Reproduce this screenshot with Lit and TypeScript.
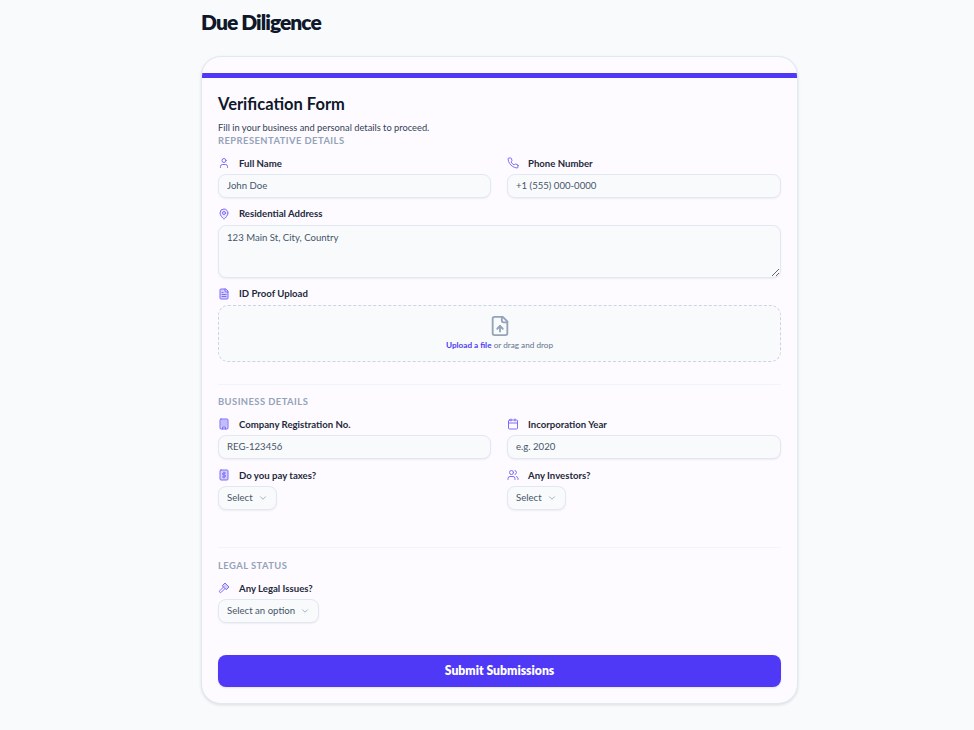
import { LitElement, css, html, svg } from 'lit'
import { customElement } from 'lit/decorators.js'

const icon = (body: unknown, size = 12) => html`<svg xmlns="http://www.w3.org/2000/svg" width=${size} height=${size} viewBox="0 0 24 24" fill="none" stroke="currentColor" stroke-width="2" stroke-linecap="round" stroke-linejoin="round">${body}</svg>`

const icons = {
  user: svg`<path d="M19 21v-2a4 4 0 0 0-4-4H9a4 4 0 0 0-4 4v2"/><circle cx="12" cy="7" r="4"/>`,
  phone: svg`<path d="M22 16.92v3a2 2 0 0 1-2.18 2 19.8 19.8 0 0 1-8.63-3.07 19.5 19.5 0 0 1-6-6 19.8 19.8 0 0 1-3.07-8.67A2 2 0 0 1 4.11 2h3a2 2 0 0 1 2 1.72c.13.96.36 1.9.7 2.81a2 2 0 0 1-.45 2.11L8.09 9.91a16 16 0 0 0 6 6l1.27-1.27a2 2 0 0 1 2.11-.45c.91.34 1.85.57 2.81.7A2 2 0 0 1 22 16.92z"/>`,
  pin: svg`<path d="M20 10c0 5-5.5 10.2-7.4 11.8a1 1 0 0 1-1.2 0C9.5 20.2 4 15 4 10a8 8 0 0 1 16 0" fill="currentColor" fill-opacity=".12"/><circle cx="12" cy="10" r="3"/>`,
  file: svg`<path d="M15 2H6a2 2 0 0 0-2 2v16a2 2 0 0 0 2 2h12a2 2 0 0 0 2-2V7z" fill="currentColor" fill-opacity=".3"/><path d="M14 2v4a2 2 0 0 0 2 2h4"/><path d="M10 9H8"/><path d="M16 13H8"/><path d="M16 17H8"/>`,
  fileUp: svg`<path d="M15 2H6a2 2 0 0 0-2 2v16a2 2 0 0 0 2 2h12a2 2 0 0 0 2-2V7z"/><path d="M14 2v4a2 2 0 0 0 2 2h4"/><path d="M12 18v-6"/><path d="m9 15 3-3 3 3"/>`,
  building: svg`<rect x="4" y="2" width="16" height="20" rx="2" fill="currentColor" fill-opacity=".3"/><path d="M9 22v-4h6v4"/><path d="M8 6h.01M16 6h.01M12 6h.01M12 10h.01M12 14h.01M16 10h.01M16 14h.01M8 10h.01M8 14h.01"/>`,
  calendar: svg`<path d="M8 2v4"/><path d="M16 2v4"/><rect x="3" y="4" width="18" height="18" rx="2"/><path d="M3 10h18"/>`,
  receipt: svg`<rect x="4" y="2" width="16" height="20" rx="2" fill="currentColor" fill-opacity=".3"/><path d="M15 8h-4a1.5 1.5 0 0 0 0 4h2a1.5 1.5 0 0 1 0 4H9"/><path d="M12 6v12"/>`,
  users: svg`<path d="M16 21v-2a4 4 0 0 0-4-4H6a4 4 0 0 0-4 4v2"/><circle cx="9" cy="7" r="4"/><path d="M22 21v-2a4 4 0 0 0-3-3.87"/><path d="M16 3.13a4 4 0 0 1 0 7.75"/>`,
  gavel: svg`<path d="m14.5 12.5-8 8a2.12 2.12 0 1 1-3-3l8-8"/><path d="m9 7 5-5 8 8-5 5z" fill="currentColor" fill-opacity=".3"/>`,
  chevron: svg`<path d="m6 9 6 6 6-6"/>`,
}

@customElement('app-root')
export class AppRoot extends LitElement {
  static styles = css`
    :host {
      display: block;
      min-height: 730px;
      background: #f8fafc;
      font-family: "Lato", "Open Sans", sans-serif;
      color: #0f172a;
    }
    .page {
      width: 597px;
      margin-left: 201px;
      padding-top: 10px;
    }
    h1 {
      margin: 0 0 22px;
      font-size: 21px;
      line-height: 24px;
      font-weight: 800;
      letter-spacing: -0.95px;
    }
    .card {
      background: #fdfbff;
      border: 1px solid #e2e8f0;
      border-radius: 20px;
      box-shadow: 0 1px 3px rgba(15, 23, 42, 0.12);
      padding-top: 16px;
      overflow: hidden;
    }
    .bar {
      height: 5px;
      background: #4f39f6;
    }
    .body {
      padding: 16px;
    }
    h2 {
      margin: 0;
      font-size: 16.5px;
      line-height: 20px;
      font-weight: 700;
    }
    .sub {
      margin: 8px 0 0;
      font-size: 9.3px;
      line-height: 12px;
      color: #334155;
    }
    .section {
      margin: 0 0 9px;
      font-size: 9.4px;
      line-height: 13px;
      font-weight: 700;
      letter-spacing: 0.45px;
      color: #94a3b8;
    }
    .grid {
      display: grid;
      grid-template-columns: 273px 1fr;
      column-gap: 16px;
      row-gap: 8.5px;
    }
    .grid.loose {
      row-gap: 9px;
    }
    .full {
      grid-column: 1 / -1;
    }
    .label {
      display: flex;
      align-items: center;
      gap: 9px;
      height: 14px;
      margin-bottom: 4px;
      font-size: 9.6px;
      font-weight: 700;
      color: #1e293b;
    }
    .label svg {
      color: #7c6cf8;
      flex: none;
    }
    input, textarea, .select {
      box-sizing: border-box;
      font: inherit;
      font-size: 9.6px;
      color: #475569;
      background: #f8fafc;
      border: 1px solid #e2e8f0;
      border-radius: 8px;
      box-shadow: 0 1px 2px rgba(15, 23, 42, 0.06);
      outline: none;
    }
    input {
      display: block;
      width: 100%;
      height: 24px;
      padding: 0 8px 2px;
    }
    textarea {
      display: block;
      width: 100%;
      height: 53.5px;
      padding: 6px 8px;
    }
    input::placeholder {
      color: #475569;
    }
    .drop {
      box-sizing: border-box;
      height: 57.5px;
      padding-bottom: 2px;
      display: flex;
      flex-direction: column;
      align-items: center;
      justify-content: center;
      gap: 3px;
      background: #f8fafc;
      border: 1px dashed #cbd5e1;
      border-radius: 10px;
      font-size: 8.2px;
      color: #64748b;
    }
    .drop svg {
      color: #94a3b8;
    }
    .drop b {
      font-weight: 700;
      color: #4f39f6;
    }
    .select {
      display: inline-flex;
      align-items: center;
      gap: 5px;
      height: 24px;
      padding: 0 8px;
      vertical-align: top;
    }
    .select span {
      padding-bottom: 2px;
    }
    .select svg {
      color: #94a3b8;
    }
    hr {
      border: 0;
      border-top: 1px solid #f1f5f9;
      margin: 22px 0 10px;
    }
    .gap-b {
      margin: 37px 0 11px;
    }
    button {
      display: block;
      width: 100%;
      height: 32px;
      margin-top: 32px;
      padding: 0 0 2px;
      border: 0;
      border-radius: 8px;
      background: #4f39f6;
      color: #fff;
      font: inherit;
      font-size: 12.2px;
      font-weight: 800;
      box-shadow: 0 1px 2px rgba(15, 23, 42, 0.1);
    }
  `

  private field(ic: unknown, label: string, control: unknown, full = false) {
    return html`<div class=${full ? 'full' : ''}>
      <div class="label">${icon(ic)}<span>${label}</span></div>
      ${control}
    </div>`
  }

  private select(text: string) {
    return html`<div class="select"><span>${text}</span>${icon(icons.chevron, 10)}</div>`
  }

  render() {
    return html`<div class="page">
      <h1>Due Diligence</h1>
      <div class="card">
        <div class="bar"></div>
        <div class="body">
          <h2>Verification Form</h2>
          <p class="sub">Fill in your business and personal details to proceed.</p>
          <div class="section">REPRESENTATIVE DETAILS</div>
          <div class="grid">
            ${this.field(icons.user, 'Full Name', html`<input value="John Doe" />`)}
            ${this.field(icons.phone, 'Phone Number', html`<input placeholder="+1 (555) 000-0000" />`)}
            ${this.field(icons.pin, 'Residential Address', html`<textarea .value=${'123 Main St, City, Country'}></textarea>`, true)}
            ${this.field(icons.file, 'ID Proof Upload', html`<div class="drop">
              ${icon(icons.fileUp, 22)}
              <div><b>Upload a file</b> or drag and drop</div>
            </div>`, true)}
          </div>
          <hr />
          <div class="section">BUSINESS DETAILS</div>
          <div class="grid loose">
            ${this.field(icons.building, 'Company Registration No.', html`<input value="REG-123456" />`)}
            ${this.field(icons.calendar, 'Incorporation Year', html`<input placeholder="e.g. 2020" />`)}
            ${this.field(icons.receipt, 'Do you pay taxes?', this.select('Select'))}
            ${this.field(icons.users, 'Any Investors?', this.select('Select'))}
          </div>
          <hr class="gap-b" />
          <div class="section">LEGAL STATUS</div>
          <div class="grid">
            ${this.field(icons.gavel, 'Any Legal Issues?', this.select('Select an option'), true)}
          </div>
          <button>Submit Submissions</button>
        </div>
      </div>
    </div>`
  }
}
